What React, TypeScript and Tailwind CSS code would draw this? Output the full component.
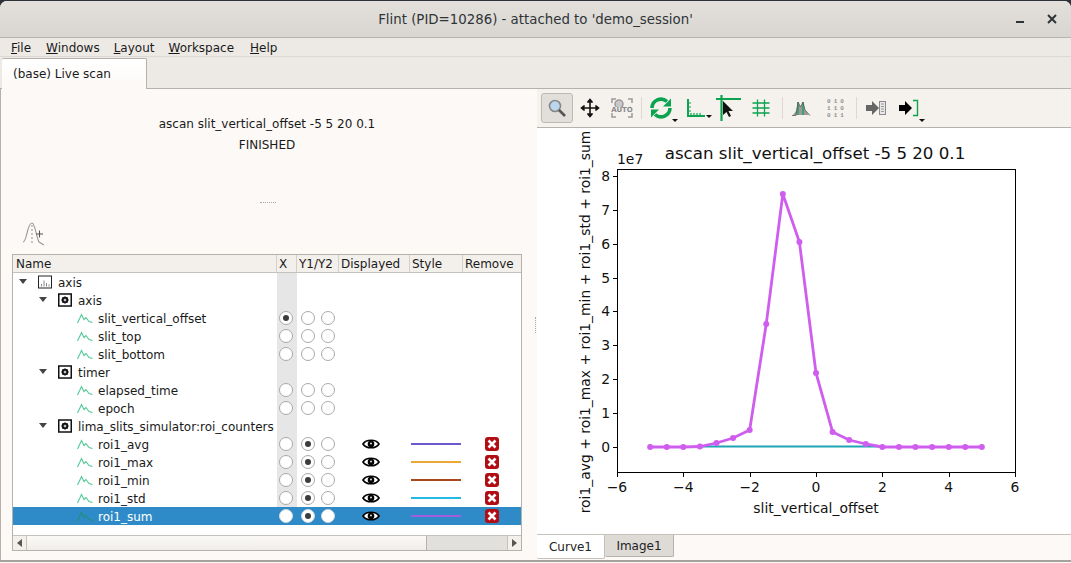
import React from 'react';

const FONT = "font-['DejaVu_Sans',sans-serif]";

const counters = [
  { name: 'slit_vertical_offset', x: true },
  { name: 'slit_top' },
  { name: 'slit_bottom' },
];

const CurveIcon = ({ dark }: { dark?: boolean }) => (
  <svg width="16" height="12" viewBox="0 0 16 12" fill="none" stroke={dark ? '#1f8f78' : '#4fcb96'} strokeWidth="1.1">
    <path d="M0.5 11 L4.5 2.5 L7 7.5 L9 5.5 L12 9.5 L15.5 10.5" />
  </svg>
);

const PlotIcon = () => (
  <svg width="14" height="14" viewBox="0 0 14 14" fill="none">
    <rect x="0.5" y="1" width="13" height="12" stroke="#222" strokeWidth="1" />
    <path d="M3.5 11.5V9M6 11.5V5.5M8.5 11.5V8M11 11.5V9.5" stroke="#888" strokeWidth="1" />
  </svg>
);

const GearBoxIcon = () => (
  <svg width="14" height="14" viewBox="0 0 14 14" fill="none">
    <rect x="0.75" y="1" width="12.5" height="12" stroke="#111" strokeWidth="1.5" />
    <circle cx="7" cy="7" r="2.4" stroke="#111" strokeWidth="1.8" />
    <path d="M7 3.4V10.6M3.4 7H10.6M4.5 4.5L9.5 9.5M9.5 4.5L4.5 9.5" stroke="#111" strokeWidth="1" />
    <circle cx="7" cy="7" r="1" fill="#fff" />
  </svg>
);

const Arrow = () => <span className="block w-0 h-0 border-l-[4px] border-r-[4px] border-t-[5px] border-l-transparent border-r-transparent border-t-[#444] -mt-[1px] -ml-[1px]" />;

const Radio = ({ on, sel }: { on?: boolean; sel?: boolean }) => (
  <span className={`w-[14px] h-[14px] -mt-[1px] rounded-full border flex items-center justify-center shrink-0 ${sel ? 'border-[#d8d8d8] bg-white' : 'border-[#a9a9a9] bg-white'}`}>
    {on && <span className="w-[6px] h-[6px] rounded-full bg-[#3c3c3c]" />}
  </span>
);

const Eye = () => (
  <svg width="18" height="12" viewBox="0 0 18 12" fill="none">
    <path d="M1 6 C4 1 14 1 17 6 C14 11 4 11 1 6Z" fill="#fff" stroke="#000" strokeWidth="1.7" />
    <circle cx="9" cy="6" r="3.3" fill="#000" />
    <circle cx="9" cy="5.4" r="1" fill="#ddd" />
  </svg>
);

const RemoveIcon = () => (
  <span className="w-[14px] h-[14px] rounded-[3px] bg-[#b30d14] flex items-center justify-center">
    <svg width="10" height="10" viewBox="0 0 10 10">
      <path d="M1.5 1.5L8.5 8.5M8.5 1.5L1.5 8.5" stroke="#fff" strokeWidth="2.6" />
    </svg>
  </span>
);

// one row of the tree, columns share widths with the header
const Row = ({ indent, icon, label, arrow, plain, x, y1, line, selected }: {
  indent: number; icon: React.ReactNode; label: string; arrow?: boolean; plain?: boolean;
  x?: boolean; y1?: boolean; line?: string; selected?: boolean;
}) => (
  <div className={`flex h-[18px] items-center ${selected ? 'bg-[#2f8bc8] text-white' : 'text-[#1a1a1a]'}`}>
    <div className="w-[264px] h-full flex items-center overflow-hidden whitespace-nowrap">
      <span className="shrink-0 flex items-center justify-center w-[10px]" style={{ marginLeft: indent }}>
        {arrow && <Arrow />}
      </span>
      <span className="ml-[9px] w-[16px] shrink-0 flex items-center justify-center">{icon}</span>
      <span className="ml-[5px] pt-[2px]">{label}</span>
    </div>
    <div className={`w-[20px] h-full flex items-center justify-center pr-[2px] ${selected ? '' : 'bg-[#e6e6e6]'}`}>
      {!plain && <Radio on={x} sel={selected} />}
    </div>
    <div className="w-[42px] h-full flex items-center justify-center gap-[6px]">
      {!plain && <Radio on={y1} sel={selected} />}
      {!plain && <Radio sel={selected} />}
    </div>
    <div className="w-[71px] h-full flex items-center justify-center pr-[7px]">{line && <Eye />}</div>
    <div className="w-[53px] h-full flex items-center justify-center pr-[2px]">
      {line && <span className="block w-[50px] h-[2px]" style={{ background: line }} />}
    </div>
    <div className="w-[57px] h-full flex items-center justify-center pl-[1px]">{line && <RemoveIcon />}</div>
  </div>
);

const Header = ({ label, w }: { label: string; w: string }) => (
  <div className={`${w} h-full flex items-center pl-[2px] border-r border-[#d3d0cc] whitespace-nowrap`}>{label}</div>
);

const G = '#0ba34f';

const ToolBtn = ({ children, w, active }: { children: React.ReactNode; w: string; active?: boolean }) => (
  <div className={`${w} h-[30px] shrink-0 flex items-center justify-center ${active ? 'rounded-[3px] border border-[#bdbab6] bg-[#e2dfdb]' : ''}`}>
    {children}
  </div>
);

const Sep = () => <span className="w-px h-[22px] bg-[#dcd9d5] shrink-0" />;

const Toolbar = () => (
  <div className="h-[39px] bg-[#f5f2ee] border-b border-[#b5b2ae] flex items-center pl-[4px] gap-0 shrink-0">
    <ToolBtn w="w-[32px]" active>
      <svg width="20" height="20" viewBox="0 0 20 20" fill="none">
        <circle cx="8" cy="8" r="5.5" fill="#bcd6ee" stroke="#888" strokeWidth="1.6" />
        <path d="M12 12L18 18" stroke="#555" strokeWidth="2.6" />
      </svg>
    </ToolBtn>
    <ToolBtn w="w-[34px]">
      <svg width="20" height="20" viewBox="0 0 20 20" fill="none" stroke="#111" strokeWidth="1.6">
        <path d="M10 2V18M2 10H18" />
        <path d="M7.5 4.5L10 1.5L12.5 4.5M7.5 15.5L10 18.5L12.5 15.5M4.5 7.5L1.5 10L4.5 12.5M15.5 7.5L18.5 10L15.5 12.5" fill="#111" />
      </svg>
    </ToolBtn>
    <ToolBtn w="w-[30px]">
      <svg width="22" height="22" viewBox="0 0 22 22" fill="none" stroke="#9a9a9a" strokeWidth="1.5">
        <path d="M1 6V2H5M17 2H21V6M1 16V20H5M17 20H21V16" />
        <circle cx="8" cy="7" r="4" fill="#c9c9c9" />
        <path d="M11 10L15 14" strokeWidth="2" />
        <rect x="2" y="10" width="18" height="5" fill="#f5f2ee" stroke="none" />
        <text x="11" y="15" textAnchor="middle" fontSize="7" fontWeight="700" fill="#8a8a8a" stroke="none" fontFamily="DejaVu Sans">AUTO</text>
      </svg>
    </ToolBtn>
    <span className="w-[4px]" />
    <Sep />
    <ToolBtn w="w-[37px]">
      <div className="relative">
        <svg width="24" height="24" viewBox="0 0 24 24" fill="none" stroke={G} strokeWidth="3.6">
          <path d="M3 12A9 9 0 0 1 18 5.5" />
          <path d="M21 12A9 9 0 0 1 6 18.5" />
          <path d="M22 2.5V10.5H14Z M2 21.5V13.5H10Z" fill={G} stroke="none" />
        </svg>
        <span className="absolute -right-[5px] bottom-[-2px] w-0 h-0 border-l-[3px] border-r-[3px] border-t-[3px] border-l-transparent border-r-transparent border-t-[#111]" />
      </div>
    </ToolBtn>
    <ToolBtn w="w-[33px]">
      <div className="relative">
        <svg width="20" height="20" viewBox="0 0 20 20" fill="none" stroke={G} strokeWidth="2">
          <path d="M2 1V18H19" />
          <path d="M5 15V17M8 15V17M11 15V17M14 15V17M3 5H5M3 9H5M3 13H5" strokeWidth="1.2" />
        </svg>
        <span className="absolute -right-[6px] bottom-0 w-0 h-0 border-l-[3px] border-r-[3px] border-t-[3px] border-l-transparent border-r-transparent border-t-[#111]" />
      </div>
    </ToolBtn>
    <ToolBtn w="w-[33px]">
      <svg width="26" height="26" viewBox="0 0 26 26" fill="none">
        <path d="M0 4H25M5.5 0V26" stroke={G} strokeWidth="2.2" />
        <path d="M7 6V20L10.5 17L13 22L15 21L12.5 16H17Z" fill="#111" />
      </svg>
    </ToolBtn>
    <ToolBtn w="w-[32px]">
      <svg width="18" height="18" viewBox="0 0 18 18" fill="none" stroke={G} strokeWidth="1.3">
        <path d="M5.5 0.5V17.5M12.5 0.5V17.5M0.5 4H17.5M0.5 9H17.5M0.5 14H17.5" />
      </svg>
    </ToolBtn>
    <span className="w-[5px]" />
    <Sep />
    <ToolBtn w="w-[36px]">
      <svg width="20" height="18" viewBox="0 0 20 18" fill="none">
        <path d="M2 16 L5 12 L7 3 L9.5 8 L12 3 L14 11 L18 16Z" fill="#9a9a9a" />
        <path d="M7 3V16M12 3V16" stroke={G} strokeWidth="1.2" />
        <path d="M1 16.5H5L7 3L9.5 8L12 3L14 11L19 16.5" stroke="#555" strokeWidth="0.8" />
      </svg>
    </ToolBtn>
    <ToolBtn w="w-[33px]">
      <div className="text-[6px] leading-[7px] tracking-[3px] pl-[3px] text-[#8f8f8f] font-['Liberation_Mono',monospace] font-bold text-center">
        <div>010</div><div>110</div><div>011</div>
      </div>
    </ToolBtn>
    <span className="w-[4px]" />
    <Sep />
    <ToolBtn w="w-[37px]">
      <svg width="22" height="20" viewBox="0 0 22 20" fill="none">
        <path d="M1 7H7V3L14 10L7 17V13H1Z" fill="#666" />
        <rect x="14.5" y="3.5" width="6" height="13" fill="#e8e8e8" stroke="#8a8a8a" />
        <path d="M16 6H19M16 8.5H19M16 11H19M16 13.5H19" stroke="#9a9a9a" />
      </svg>
    </ToolBtn>
    <ToolBtn w="w-[30px]">
      <div className="relative">
        <svg width="22" height="20" viewBox="0 0 22 20" fill="none">
          <path d="M1 7H7V3L14 10L7 17V13H1Z" fill="#000" />
          <path d="M15 2.5H19.5V17.5H15" stroke={G} strokeWidth="1.4" />
        </svg>
        <span className="absolute right-[-5px] bottom-[-4px] w-0 h-0 border-l-[3px] border-r-[3px] border-t-[3px] border-l-transparent border-r-transparent border-t-[#111]" />
      </div>
    </ToolBtn>
  </div>
);

const sx = (v: number) => 816 - 537 + v * 33.17;
const sy = (v: number) => 447 - 128 - v * 33.9;
const curveY = [447, 447, 447, 446.5, 443, 438, 430, 324, 194, 242, 373, 432, 440, 444, 447, 447, 447, 447, 447, 447, 447];
const curve = curveY.map((y, i) => [sx(-5 + i * 0.5), y - 128]);

const Plot = () => (
  <svg width="534" height="406" viewBox="0 0 534 406" className="block bg-white shrink-0" fontFamily="DejaVu Sans" fill="#111">
    <text x="278" y="31" fontSize="16.67" textAnchor="middle">ascan slit_vertical_offset -5 5 20 0.1</text>
    <text x="80" y="36" fontSize="13.9">1e7</text>
    <text transform="translate(53 194) rotate(-90)" fontSize="13.9" textAnchor="middle">roi1_avg + roi1_max + roi1_min + roi1_std + roi1_sum</text>
    <text x="279" y="385" fontSize="13.9" textAnchor="middle">slit_vertical_offset</text>
    <rect x="80.5" y="41.5" width="398" height="303" fill="none" stroke="#000" strokeWidth="1" />
    {[-6, -4, -2, 0, 2, 4, 6].map((v) => (
      <g key={v}>
        <path d={`M${Math.round(sx(v)) + 0.5} 345V349`} stroke="#000" />
        <text x={sx(v)} y="364" fontSize="13.9" textAnchor="middle">{v < 0 ? `−${-v}` : v}</text>
      </g>
    ))}
    {[0, 1, 2, 3, 4, 5, 6, 7, 8].map((v) => (
      <g key={v}>
        <path d={`M76 ${Math.round(sy(v)) + 0.5}H80`} stroke="#000" />
        <text x="73" y={sy(v) + 5} fontSize="13.9" textAnchor="end">{v}</text>
      </g>
    ))}
    <path d={`M${sx(-3.5)} 318.5H${sx(2)}`} stroke="#1fa6b4" strokeWidth="2" />
    <polyline points={curve.map((p) => p.join(',')).join(' ')} fill="none" stroke="#cf5ded" strokeWidth="2.8" />
    {curve.map((p, i) => <circle key={i} cx={p[0]} cy={p[1]} r="3" fill="#cf5ded" />)}
  </svg>
);

export default function App() {
  return (
    <div className={`${FONT} w-[1071px] h-[563px] overflow-hidden bg-[#2c3038] pt-[1px] text-[12px] text-[#1a1a1a]`}>
      <div className="h-full flex flex-col rounded-t-[7px] overflow-hidden bg-[#fcf9f6]">
        <div className="h-[37px] shrink-0 relative flex items-center justify-center pt-[2px] bg-gradient-to-b from-[#e3e0dc] to-[#d9d6d2] border-b border-[#b8b5b1] text-[13.33px] font-medium text-[#2e3436]">
          <span>Flint (PID=10286) - attached to 'demo_session'</span>
          <span className="absolute right-[47px] top-[20px] w-[8px] h-[2px] bg-[#2e3436]" />
          <svg className="absolute right-[14px] top-[13px]" width="10" height="10" viewBox="0 0 10 10">
            <path d="M1 1L9 9M9 1L1 9" stroke="#2e3436" strokeWidth="2" />
          </svg>
        </div>
        <div className="h-[19px] shrink-0 flex items-center bg-[#edeae6] border-b border-[#dcd9d5] pl-[11px] pt-[2px] gap-[14px]">
          <span className="mr-[1px]"><u>F</u>ile</span>
          <span><u>W</u>indows</span>
          <span><u>L</u>ayout</span>
          <span className="mr-[2px]"><u>W</u>orkspace</span>
          <span><u>H</u>elp</span>
        </div>
        <div className="h-[32px] shrink-0 flex items-end bg-[#edeae6] border-b border-[#b5b2ae]">
          <div className="w-[145px] h-[31px] -mb-px ml-[2px] pl-[11px] flex items-center bg-gradient-to-b from-white to-[#fcf9f6] border-r border-t border-[#b5b2ae] rounded-t-[2px] whitespace-nowrap">
            (base) Live scan
          </div>
        </div>
        <div className="flex-1 flex min-h-0 border-l border-[#b5b2ae]">
          <div className="w-[536px] flex shrink-0 relative">
            <div className="w-[532px] shrink-0 flex flex-col">
              <div className="h-[164px] flex flex-col items-center shrink-0 pt-[25px] leading-[21px]">
                <div>ascan slit_vertical_offset -5 5 20 0.1</div>
                <div>FINISHED</div>
                <div className="mt-[46px] ml-[1px] w-[16px] border-t border-dotted border-[#a8a8a8]" />
              </div>
              <div className="h-[28px] pl-[21px] flex items-start shrink-0 mt-[-31px]">
                <svg width="24" height="24" viewBox="0 0 24 24" fill="none" stroke="#9a9a9a" strokeWidth="1.1">
                  <path d="M1 20C5 20 5 1 10 1C13 1 14 14 17 20L22 23" />
                  <path d="M10 3V22" strokeDasharray="2 2" />
                  <path d="M14 12H21M17.5 8.5V15.5" stroke="#555" />
                </svg>
              </div>
              <div className="ml-[11px] mr-[11px] mt-[4px] w-[510px] h-[297px] border border-[#b5b2ae] bg-white flex flex-col shrink-0">
                <div className="h-[18px] shrink-0 flex items-center bg-[#f3f0ec] border-b border-[#c5c2be]">
                  <div className="w-[264px] h-full flex items-center pl-[3px] border-r border-[#d3d0cc]">Name</div>
                  <Header label="X" w="w-[20px]" />
                  <Header label="Y1/Y2" w="w-[42px]" />
                  <Header label="Displayed" w="w-[71px]" />
                  <Header label="Style" w="w-[53px]" />
                  <div className="w-[57px] pl-[2px]">Remove</div>
                </div>
                <Row indent={5} icon={<PlotIcon />} label="axis" plain arrow />
                <Row indent={25} icon={<GearBoxIcon />} label="axis" plain arrow />
                {counters.map((c) => (
                  <Row key={c.name} indent={45} icon={<CurveIcon />} label={c.name} x={c.x} />
                ))}
                <Row indent={25} icon={<GearBoxIcon />} label="timer" plain arrow />
                <Row indent={45} icon={<CurveIcon />} label="elapsed_time" />
                <Row indent={45} icon={<CurveIcon />} label="epoch" />
                <Row indent={25} icon={<GearBoxIcon />} label="lima_slits_simulator:roi_counters" plain arrow />
                <Row indent={45} icon={<CurveIcon />} label="roi1_avg" y1 line="#6a5acd" />
                <Row indent={45} icon={<CurveIcon />} label="roi1_max" y1 line="#eaa838" />
                <Row indent={45} icon={<CurveIcon />} label="roi1_min" y1 line="#a8481c" />
                <Row indent={45} icon={<CurveIcon />} label="roi1_std" y1 line="#22b8e8" />
                <Row indent={45} icon={<CurveIcon dark />} label="roi1_sum" y1 line="#a45ddd" selected />
                <div className="flex-1" />
                <div className="h-[15px] shrink-0 flex items-center bg-[#f3f0ec] border-t border-[#c5c2be]">
                  <div className="w-[14px] h-full flex items-center justify-center border-r border-[#c5c2be]">
                    <span className="w-0 h-0 border-t-[4px] border-b-[4px] border-r-[5px] border-t-transparent border-b-transparent border-r-[#555]" />
                  </div>
                  <div className="w-[400px] h-full bg-gradient-to-b from-[#fbf9f7] to-[#f0edea] border-r border-[#b5b2ae]" />
                  <div className="flex-1 h-full bg-[#e2e0dc]" />
                  <div className="w-[14px] h-full flex items-center justify-center border-l border-[#c5c2be]">
                    <span className="w-0 h-0 border-t-[4px] border-b-[4px] border-l-[5px] border-t-transparent border-b-transparent border-l-[#555]" />
                  </div>
                </div>
              </div>
            </div>
            <div className="flex-1 flex items-center justify-center">
              <span className="h-[16px] border-l border-dotted border-[#a8a8a8]" />
            </div>
          </div>
          <div className="flex-1 min-w-0 flex flex-col">
            <Toolbar />
            <Plot />
            <div className="h-[1px] bg-[#c5c2be] shrink-0" />
            <div className="flex pl-0 text-[#222] items-start">
              <div className="w-[68px] h-[24px] flex items-center justify-center bg-white border-b border-r border-[#c5c2be] rounded-b-[2px]">Curve1</div>
              <div className="w-[69px] h-[22px] flex items-center justify-center bg-[#dedbd7] border-b border-r border-[#b5b2ae] rounded-b-[2px]">Image1</div>
            </div>
          </div>
        </div>
        <div className="h-[2px] shrink-0 bg-[#a5a29e]" />
        <div className="h-[1px] shrink-0 bg-[#fcf9f6]" />
      </div>
    </div>
  );
}
